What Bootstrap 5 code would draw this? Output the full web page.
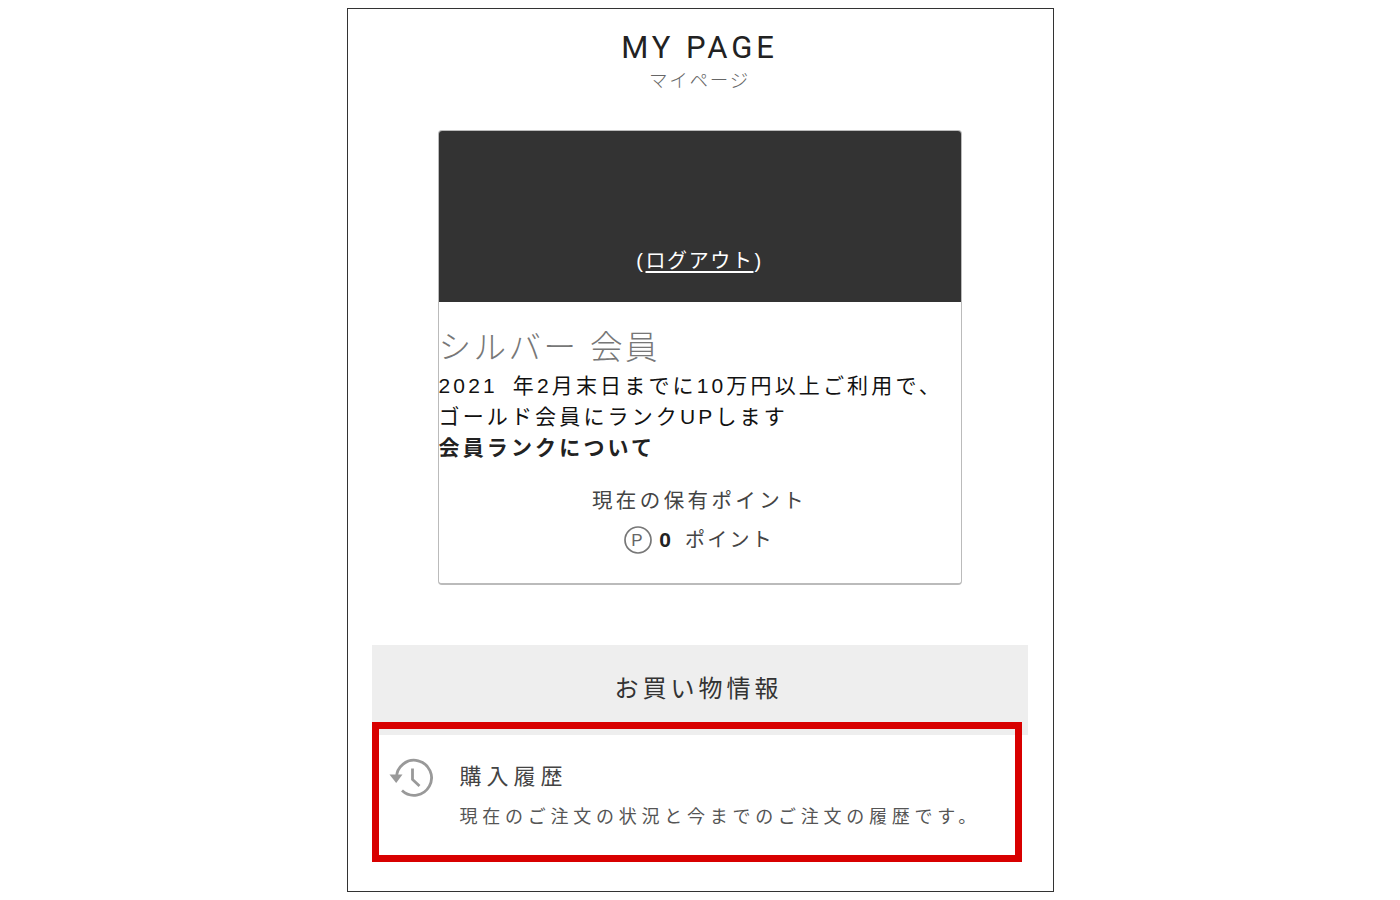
<!DOCTYPE html>
<html lang="ja">
<head>
<meta charset="utf-8">
<title>MY PAGE</title>
<link rel="stylesheet" href="https://cdn.jsdelivr.net/npm/bootstrap@5.3.0/dist/css/bootstrap.min.css">
<style>
html,body{background:#fff;}
body{font-family:"Liberation Sans","Noto Sans CJK JP",sans-serif;color:#222;height:900px;overflow:hidden;}
.frame-box{width:707px;height:884px;margin:8px auto 0;border:1px solid #333;padding:0 25px 0 24px;position:relative;}
.page-en{font-family:Roboto,"Liberation Sans",sans-serif;font-size:31px;line-height:34px;letter-spacing:3.9px;color:#222;margin:22px 0 0;font-weight:400;}
.page-ja{font-size:18.5px;line-height:26px;letter-spacing:1.8px;color:#666;margin:3px 0 0;font-weight:300;}
.member-box{width:524px;height:455px;margin:36px auto 0;border:1px solid #bbb;border-bottom-width:2px;border-radius:4px;overflow:hidden;}
.member-head{height:171px;background:#333;color:#fff;font-size:20px;line-height:24px;letter-spacing:1.6px;padding-bottom:29px;}
.member-head a{color:#fff;text-decoration:underline;text-underline-offset:3px;margin:0 1px 0 1px;}
.rank-name{font-size:32.5px;line-height:38px;letter-spacing:2.5px;color:#777;margin-top:27px;font-weight:300;}
.rank-text{font-size:21px;line-height:31px;letter-spacing:3.15px;word-spacing:6px;color:#111;margin-top:3px;}
.rank-link{font-weight:700;color:#222;}
.point-label{font-size:20.5px;line-height:28px;letter-spacing:3.4px;color:#444;margin-top:24px;}
.point-row{font-size:20px;line-height:30px;letter-spacing:2.2px;color:#444;margin-top:10px;padding-right:2px;}
.point-num{font-weight:700;color:#222;font-size:21px;margin-left:6px;margin-right:12px;}
.shop-head{height:90px;margin-top:60px;background:#eee;font-size:24px;letter-spacing:4px;color:#333;padding:0 2px 2px 0;}
.hist-row{height:126px;border-bottom:1px solid #eee;width:650px;}
.hist-icon{width:44px;height:42px;margin-left:17px;margin-top:22px;flex:none;}
.hist-copy{margin-left:27px;}
.hist-title{font-size:22px;line-height:28px;letter-spacing:5px;color:#444;margin-top:28px;}
.hist-desc{font-size:18px;line-height:26px;letter-spacing:4.75px;color:#555;margin-top:13px;white-space:nowrap;}
.red-outline{position:absolute;left:24px;top:713px;width:650px;height:140px;border:7px solid #d80000;pointer-events:none;}
</style>
</head>
<body>
<div class="frame-box">
  <header class="text-center">
    <h1 class="page-en">MY PAGE</h1>
    <p class="page-ja">マイページ</p>
  </header>
  <section class="member-box">
    <div class="member-head d-flex align-items-end justify-content-center">(<a href="#">ログアウト</a>)</div>
    <div class="rank-name">シルバー 会員</div>
    <div class="rank-text">2021 年2月末日までに10万円以上ご利用で、<br>ゴールド会員にランクUPします<br><span class="rank-link">会員ランクについて</span></div>
    <div class="point-label text-center">現在の保有ポイント</div>
    <div class="point-row d-flex justify-content-center align-items-center">
      <svg width="30" height="30" viewBox="0 0 30 30" aria-hidden="true"><circle cx="15" cy="15" r="13" fill="none" stroke="#777" stroke-width="1.7"/><text x="15" y="21" text-anchor="middle" font-family="Liberation Sans" font-size="17" fill="#666">P</text></svg>
      <span class="point-num">0</span><span>ポイント</span>
    </div>
  </section>
  <section>
    <div class="shop-head d-flex align-items-center justify-content-center">お買い物情報</div>
    <div class="hist-row d-flex">
      <svg class="hist-icon" viewBox="0 0 44 42" aria-hidden="true"><path d="M7.5 21A17.5 17.5 0 1 1 13 33.5" fill="none" stroke="#999" stroke-width="2.8"/><path d="M0.5 17.5H13.5L7.2 26Z" fill="#999"/><path d="M23.5 11.5V22.5L30.5 29" fill="none" stroke="#999" stroke-width="2.8"/></svg>
      <div class="hist-copy">
        <div class="hist-title">購入履歴</div>
        <div class="hist-desc">現在のご注文の状況と今までのご注文の履歴です。</div>
      </div>
    </div>
  </section>
  <div class="red-outline"></div>
</div>
<script src="https://cdn.jsdelivr.net/npm/bootstrap@5.3.0/dist/js/bootstrap.bundle.min.js"></script>
</body>
</html>
